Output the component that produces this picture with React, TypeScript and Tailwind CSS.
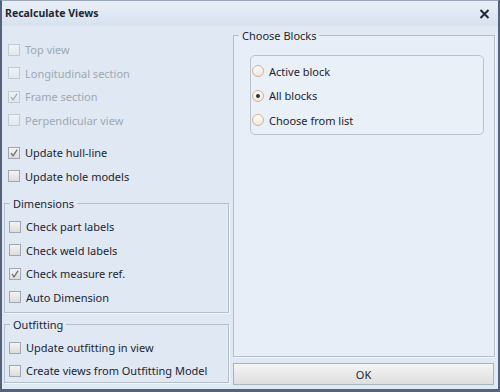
import React from 'react';

const font = { fontFamily: '"Noto Sans", "Liberation Sans", sans-serif' };

function CheckBox({ checked, disabled }: { checked?: boolean; disabled?: boolean }) {
    return (
        <span
            className={`flex h-[12px] w-[12px] shrink-0 items-center justify-center border ${
                disabled
                    ? 'border-[#c3cad2] bg-gradient-to-b from-[#eef2f6] to-[#e2e8ee]'
                    : 'border-[#9fa8b2] bg-gradient-to-b from-[#f4f4f4] to-[#dcdcdc]'
            }`}
        >
            {checked && (
                <svg width="10" height="10" viewBox="0 0 10 10">
                    <path
                        d="M2 5.2 L4 7.8 L8.2 1.6"
                        fill="none"
                        stroke={disabled ? '#a9b0b8' : '#6b737c'}
                        strokeWidth="1.3"
                    />
                </svg>
            )}
        </span>
    );
}

function CheckRow({
    label,
    checked,
    disabled,
    h = 'h-[23.5px]',
}: {
    label: string;
    checked?: boolean;
    disabled?: boolean;
    h?: string;
}) {
    return (
        <div className={`flex ${h} items-center gap-[5px] pl-[4px]`}>
            <CheckBox checked={checked} disabled={disabled} />
            <span className={disabled ? 'text-[#a0a8b1]' : 'text-[#1c2631]'}>{label}</span>
        </div>
    );
}

function Radio({ label, selected }: { label: string; selected?: boolean }) {
    return (
        <div className="flex h-[24.5px] items-center gap-[5px] pl-[1px]">
            <span className="flex h-[12px] w-[12px] items-center justify-center rounded-full border border-[#d6b094] bg-gradient-to-b from-[#fdfdfd] to-[#efe7df]">
                {selected && <span className="h-[4px] w-[4px] rounded-full bg-[#27313c]" />}
            </span>
            <span className="text-[#1c2631]">{label}</span>
        </div>
    );
}

export default function App() {
    return (
        <div
            style={font}
            className="flex h-[392px] w-[500px] flex-col border-x-2 border-t border-b-[3px] border-[#56627a] border-t-[#98a6b8] bg-[#dfe8f3] text-[11px] leading-none"
        >
            {/* Title bar */}
            <div className="flex h-[25px] shrink-0 items-center justify-between bg-gradient-to-b from-[#e9eff7] to-[#d7e2ef] pl-[3px] pr-[8px]">
                <span className="text-[10.5px] font-bold text-[#1d2733]">Recalculate Views</span>
                <svg width="11" height="10" viewBox="0 0 11 10">
                    <path d="M1.5 1 L9.5 9 M9.5 1 L1.5 9" stroke="#1f2833" strokeWidth="2" />
                </svg>
            </div>

            <div className="flex flex-1 gap-[4px] pl-[2px] pr-[3px]">
                {/* Left column */}
                <div className="flex w-[225px] flex-col pt-[12px]">
                    <CheckRow label="Top view" disabled />
                    <CheckRow label="Longitudinal section" disabled />
                    <CheckRow label="Frame section" checked disabled />
                    <CheckRow label="Perpendicular view" disabled />
                    <div className="mt-[9px]">
                        <CheckRow label="Update hull-line" checked />
                        <CheckRow label="Update hole models" />
                    </div>

                    <fieldset className="mt-[10px] border border-[#b4bfcb] pb-[3px] shadow-[1px_1px_0_#f3f7fb]">
                        <legend className="ml-[5px] px-[3px] text-[#1c2631]">Dimensions</legend>
                        <div className="pt-[6px]">
                            <CheckRow label="Check part labels" />
                            <CheckRow label="Check weld labels" />
                            <CheckRow label="Check measure ref." checked />
                            <CheckRow label="Auto Dimension" />
                        </div>
                    </fieldset>

                    <fieldset className="mt-[6px] border border-[#b4bfcb] shadow-[1px_1px_0_#f3f7fb]">
                        <legend className="ml-[5px] px-[3px] text-[#1c2631]">Outfitting</legend>
                        <div className="pt-[6px]">
                            <CheckRow label="Update outfitting in view" h="h-[23px]" />
                            <CheckRow label="Create views from Outfitting Model" h="h-[23px]" />
                        </div>
                    </fieldset>
                </div>

                {/* Right column */}
                <div className="flex flex-1 flex-col pt-[4px] pb-[4px]">
                    <fieldset className="flex-1 border border-[#b4bfcb] bg-[#e7eef7] shadow-[1px_1px_0_#f3f7fb]">
                        <legend className="ml-[5px] px-[3px] text-[#1c2631]">Choose Blocks</legend>
                        <div className="mt-[14px] ml-[16px] mr-[10px] rounded-[5px] border border-[#b9c3ce] bg-[#e9f0f8] pt-[3px] pb-[1px]">
                            <Radio label="Active block" />
                            <Radio label="All blocks" selected />
                            <Radio label="Choose from list" />
                        </div>
                    </fieldset>
                    <button className="mt-[6px] h-[22px] w-[261px] border border-[#aab3bd] bg-gradient-to-b from-[#f4f4f4] to-[#dedede] text-[#1c2631]">
                        OK
                    </button>
                </div>
            </div>
        </div>
    );
}
